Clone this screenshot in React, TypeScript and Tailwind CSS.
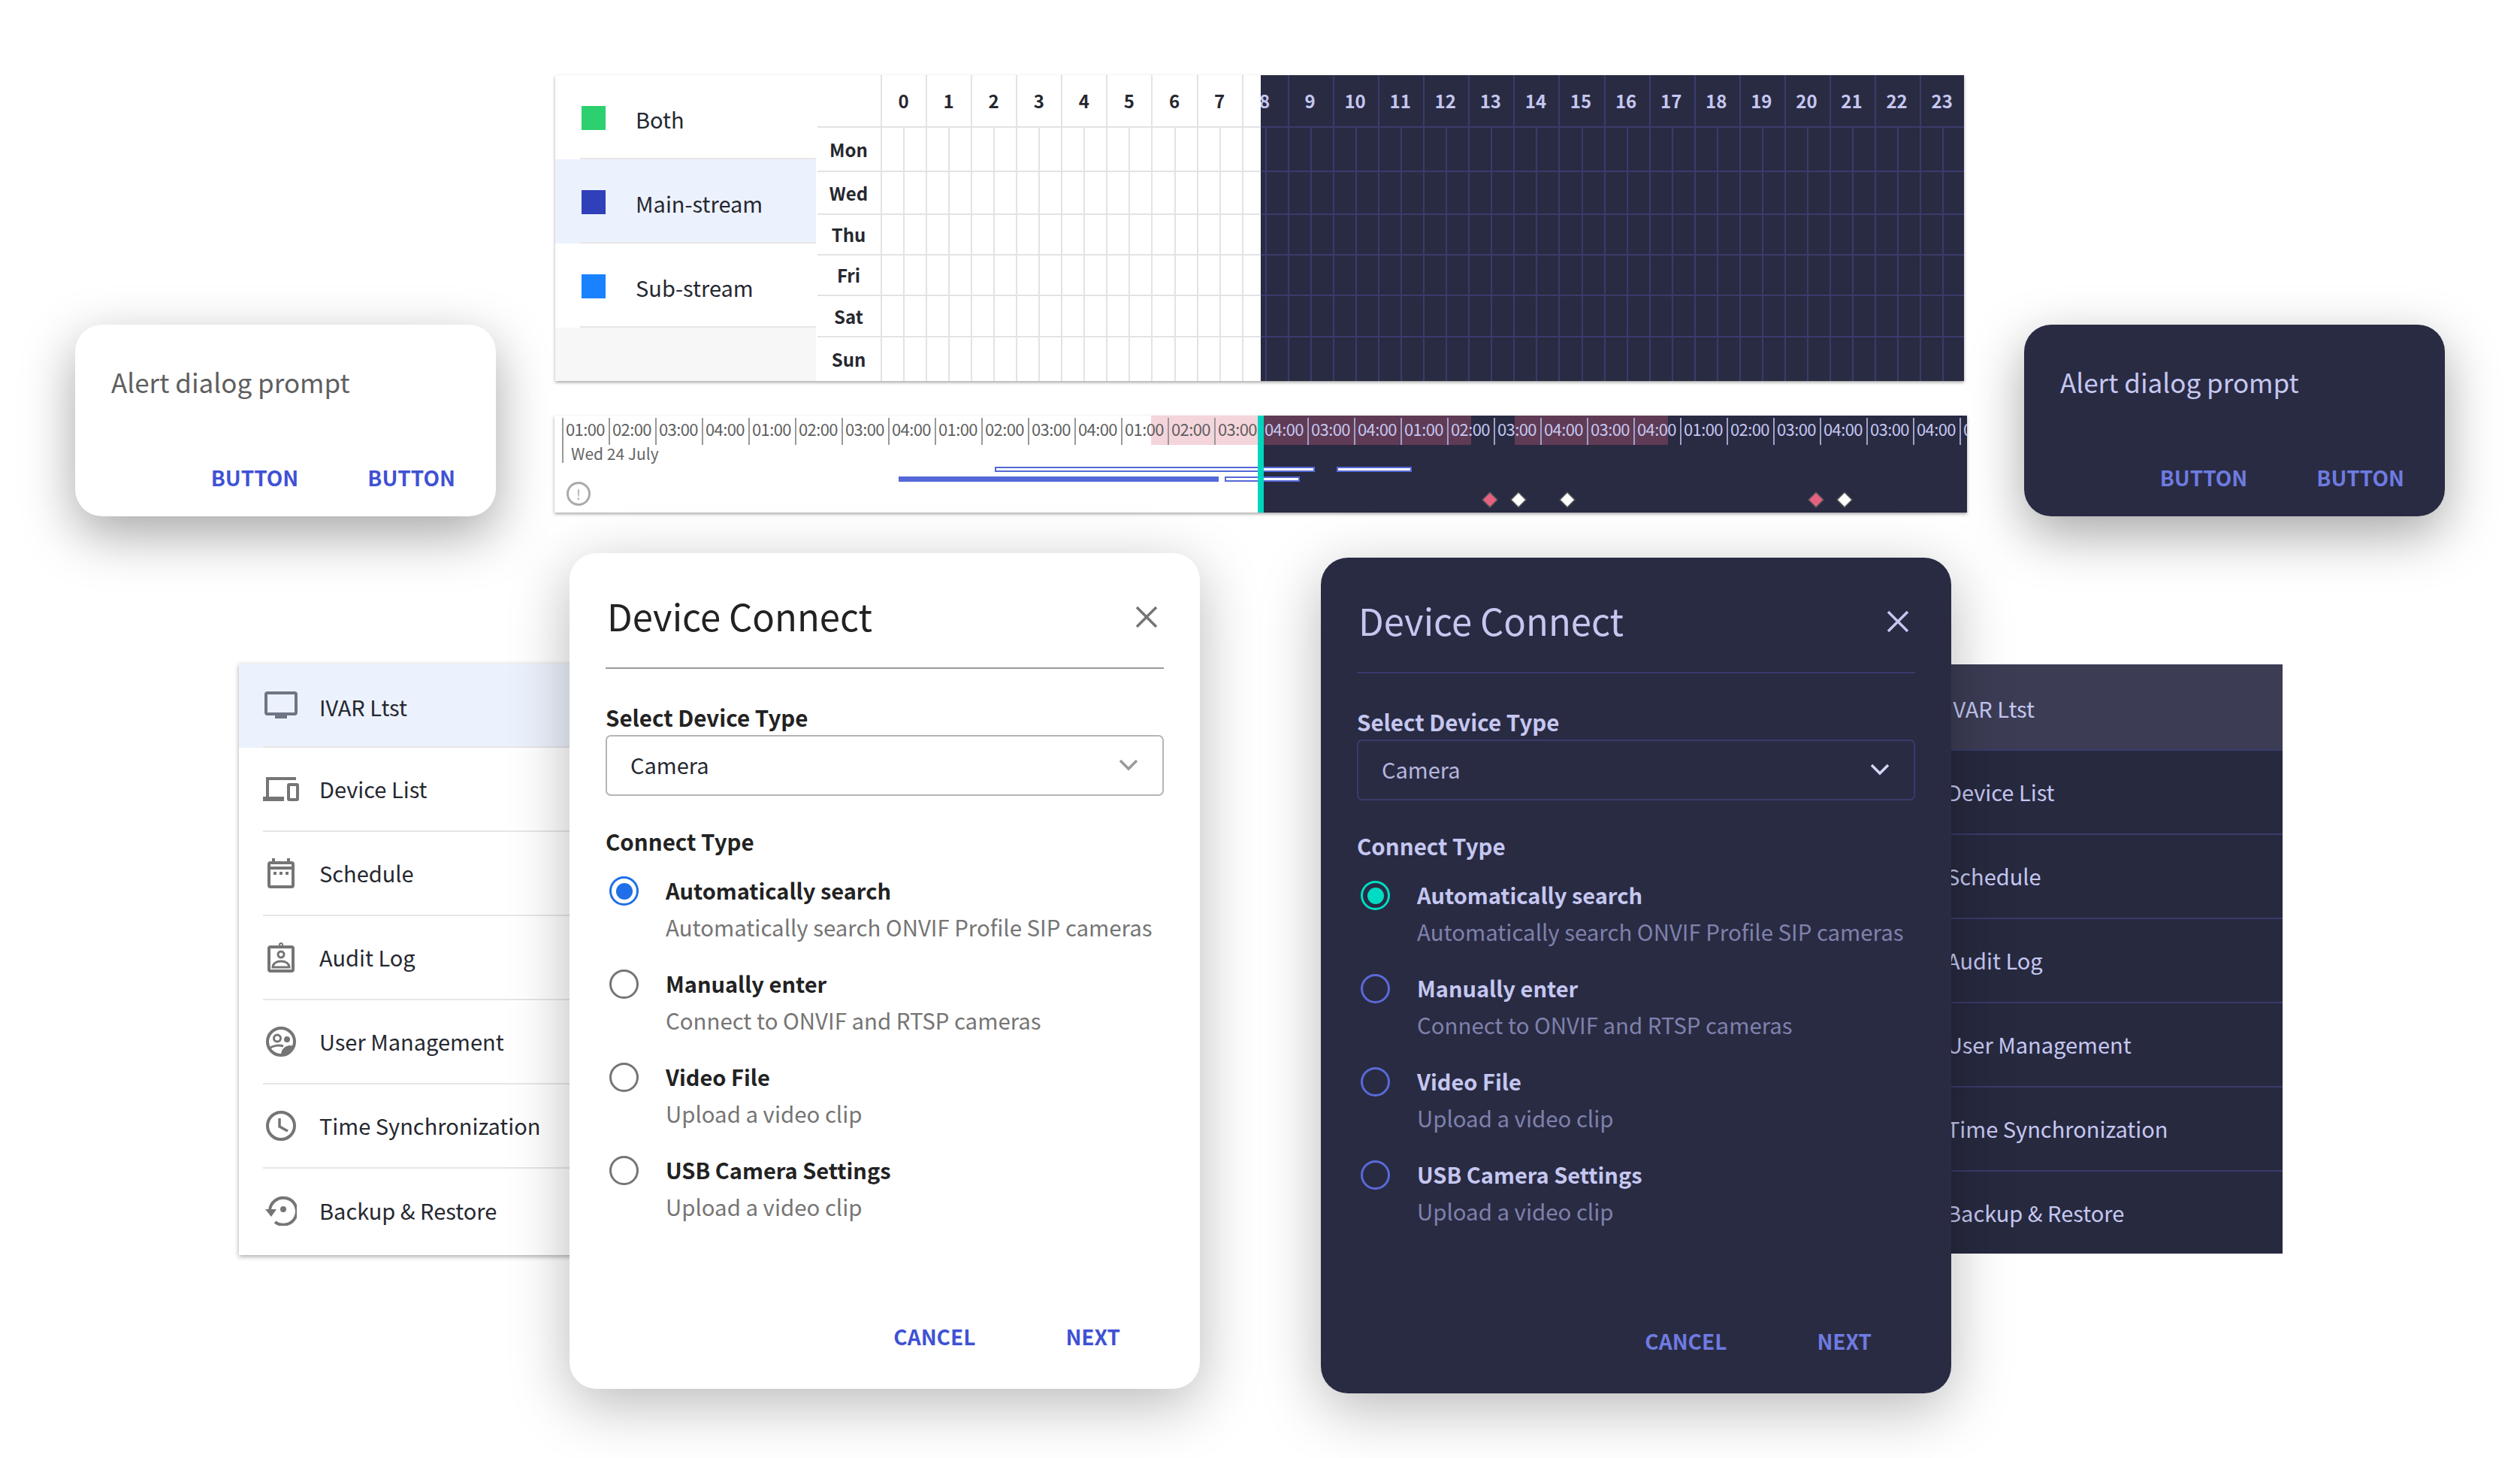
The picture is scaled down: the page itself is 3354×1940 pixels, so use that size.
const FONT = 'font-["Noto_Sans_CJK_SC","Noto_Sans",sans-serif]'

const menu = ['IVAR Ltst', 'Device List', 'Schedule', 'Audit Log', 'User Management', 'Time Synchronization', 'Backup & Restore']
const hours = Array.from({ length: 24 }, (_, i) => i)
const days = [
  { name: 'Mon', h: 'h-[59px]' },
  { name: 'Wed', h: 'h-[57px]' },
  { name: 'Thu', h: 'h-[54px]' },
  { name: 'Fri', h: 'h-[54px]' },
  { name: 'Sat', h: 'h-[55px]' },
  { name: 'Sun', h: 'h-[58px]' },
]
const ticks = ['01:00', '02:00', '03:00', '04:00', '01:00', '02:00', '03:00', '04:00', '01:00', '02:00', '03:00', '04:00', '01:00', '02:00', '03:00', '04:00', '03:00', '04:00', '01:00', '02:00', '03:00', '04:00', '03:00', '04:00', '01:00', '02:00', '03:00', '04:00', '03:00', '04:00', '01:00']

const options = [
  { title: 'Automatically search', desc: 'Automatically search ONVIF Profile SIP cameras' },
  { title: 'Manually enter', desc: 'Connect to ONVIF and RTSP cameras' },
  { title: 'Video File', desc: 'Upload a video clip' },
  { title: 'USB Camera Settings', desc: 'Upload a video clip' },
]

function MenuIcon({ i }: { i: number }) {
  if (i === 0)
    return (
      <svg width="44" height="36" viewBox="0 0 44 36" fill="none">
        <rect x="2" y="2" width="40" height="28" rx="2" stroke="#6e7686" strokeWidth="4" />
        <rect x="14" y="32" width="16" height="4" fill="#6e7686" />
      </svg>
    )
  if (i === 1)
    return (
      <svg width="48" height="32" viewBox="0 0 48 32" fill="none" stroke="#757575" strokeWidth="4">
        <path d="M44 2H6v26" />
        <rect x="0" y="26" width="28" height="6" fill="#757575" stroke="none" />
        <rect x="34" y="10" width="12" height="20" rx="1" />
      </svg>
    )
  if (i === 2)
    return (
      <svg width="36" height="40" viewBox="0 0 36 40" fill="none" stroke="#757575" strokeWidth="4">
        <rect x="2" y="6" width="32" height="32" rx="2" />
        <path d="M2 13h32" />
        <g fill="#757575" stroke="none">
          <rect x="6" y="0" width="4" height="5" />
          <rect x="26" y="0" width="4" height="5" />
          <rect x="8" y="18" width="4" height="4" />
          <rect x="16" y="18" width="4" height="4" />
          <rect x="24" y="18" width="4" height="4" />
        </g>
      </svg>
    )
  if (i === 3)
    return (
      <svg width="36" height="40" viewBox="0 0 36 40" fill="none" stroke="#757575" strokeWidth="4">
        <rect x="2" y="6" width="32" height="32" rx="2" />
        <circle cx="18" cy="3" r="2" strokeWidth="2" />
        <circle cx="18" cy="16" r="4" strokeWidth="3" />
        <path d="M7 33c0-5 5-8 11-8s11 3 11 8z" strokeWidth="3" />
      </svg>
    )
  if (i === 4)
    return (
      <svg width="40" height="40" viewBox="0 0 40 40" fill="none" stroke="#757575" strokeWidth="4">
        <circle cx="20" cy="20" r="18" />
        <circle cx="15" cy="15.5" r="4.5" strokeWidth="3" />
        <circle cx="28" cy="17" r="4" fill="#757575" stroke="none" />
        <path d="M3 30c6-5 14-6 20-4" strokeWidth="3" />
        <path d="M20 38c0-8 6-13 12-13 3 0 4 1 5 1-2 7-9 12-17 12z" fill="#757575" stroke="none" />
      </svg>
    )
  if (i === 5)
    return (
      <svg width="40" height="40" viewBox="0 0 40 40" fill="none" stroke="#757575" strokeWidth="4">
        <circle cx="20" cy="20" r="18" />
        <path d="M18 10v11l11 6" strokeWidth="3.5" />
      </svg>
    )
  return (
    <svg width="42" height="40" viewBox="0 0 42 40" fill="none" stroke="#757575" strokeWidth="4">
      <path d="M6 20a18 18 0 1 1 7 15" />
      <path d="M0 18h15l-7 10z" fill="#757575" stroke="none" />
      <circle cx="24" cy="18" r="4" fill="#757575" stroke="none" />
    </svg>
  )
}

function SideMenu({ dark }: { dark?: boolean }) {
  return (
    <div className={`w-[554px] flex flex-col ${FONT} ${dark ? 'bg-[#27293f] text-[#c5c7f0]' : 'bg-white text-[#262830] shadow-[0_2px_6px_rgba(0,0,0,0.35)]'}`}>
      {menu.map((label, i) => {
        const last = i === menu.length - 1
        let rowClass = 'h-[112px]'
        if (last) rowClass = dark ? 'h-[109px]' : 'h-[115px] pb-[3px]'
        if (i === 0) rowClass = dark ? 'h-[115px] bg-[#3c3d55]' : 'h-[112px] bg-[#ecf2fd]'
        return (
          <div key={label} className={`flex pl-[32px] text-[29px] ${rowClass}`}>
            <div className={`flex-1 h-full flex items-center ${last ? '' : 'border-b-2'} ${dark ? 'border-[#3a3b6b]' : 'border-[#e6e6e6]'}`}>
              <div className="w-[48px] mr-[27px] flex justify-center shrink-0">{!dark && <MenuIcon i={i} />}</div>
              <span className={i === 0 ? 'pt-[5px]' : ''}>{label}</span>
            </div>
          </div>
        )
      })}
    </div>
  )
}

function Alert({ dark }: { dark?: boolean }) {
  return (
    <div className={`w-[560px] h-[255px] rounded-[36px] pl-[48px] pr-[54px] flex flex-col shadow-[0_24px_70px_rgba(0,0,0,0.35)] ${FONT} ${dark ? 'bg-[#292b43]' : 'bg-white'}`}>
      <p className={`text-[35px] leading-none mt-[58px] ${dark ? 'text-[#c5c7f0]' : 'text-[#5f5f5f]'}`}>Alert dialog prompt</p>
      <div className={`mt-auto mb-[38px] flex justify-end gap-[92px] text-[28px] font-bold leading-none ${dark ? 'text-[#6e7be0]' : 'text-[#3f51d4]'}`}>
        <span>BUTTON</span>
        <span>BUTTON</span>
      </div>
    </div>
  )
}

function DeviceDialog({ dark }: { dark?: boolean }) {
  const head = dark ? 'text-[#c5c7f0]' : 'text-[#222]'
  const line = dark ? 'border-[#3a3b6b]' : 'border-[#999]'
  const action = dark ? 'text-[#6e7be0]' : 'text-[#3f51d4]'
  return (
    <div className={`w-[839px] h-[1112px] rounded-[36px] pl-[48px] pr-[48px] flex flex-col shadow-[0_20px_80px_rgba(0,0,0,0.28)] ${FONT} ${dark ? 'bg-[#292b43]' : 'bg-white'}`}>
      <div className={`h-[154px] flex items-start justify-between border-b-2 ${line}`}>
        <h2 className={`text-[49px] font-normal leading-none mt-[58px] ml-[2px] ${head}`}>Device Connect</h2>
        <svg className="mt-[70px] mr-[8px]" width="30" height="30" viewBox="0 0 30 30" stroke={dark ? '#c5c7f0' : '#757575'} strokeWidth="3.5">
          <path d="M2 2l26 26M28 2L2 28" />
        </svg>
      </div>
      <p className={`text-[29.5px] font-bold leading-none mt-[50px] ${head}`}>Select Device Type</p>
      <div className={`mt-[8px] h-[81px] rounded-[7px] border-2 flex items-center justify-between pl-[31px] pr-[32px] ${dark ? 'border-[#3a3b6b]' : 'border-[#b5b5b5]'}`}>
        <span className={`text-[29px] ${dark ? 'text-[#b5b7dd]' : 'text-[#262830]'}`}>Camera</span>
        <svg width="26" height="16" viewBox="0 0 26 16" fill="none" stroke={dark ? '#d5d7f5' : '#999'} strokeWidth="3.5">
          <path d="M2 2l11 11L24 2" />
        </svg>
      </div>
      <p className={`text-[29.5px] font-bold leading-none mt-[46px] ${head}`}>Connect Type</p>
      <div className="mt-[27px] flex flex-col">
        {options.map((o, i) => (
          <div key={o.title} className="h-[124px] flex">
            <div className="w-[80px] shrink-0 pl-[5px]">
              <span
                className={`mt-[5px] w-[39px] h-[39px] rounded-full border-[3.5px] flex items-center justify-center ${
                  i === 0
                    ? dark
                      ? 'border-[#00dcc4]'
                      : 'border-[#1f6fe8]'
                    : dark
                      ? 'border-[#5a6ad8]'
                      : 'border-[#757575]'
                }`}
              >
                {i === 0 && <span className={`w-[22px] h-[22px] rounded-full ${dark ? 'bg-[#00dcc4]' : 'bg-[#1f6fe8]'}`} />}
              </span>
            </div>
            <div className="flex flex-col">
              <span className={`text-[29px] font-bold leading-[46px] ${head}`}>{o.title}</span>
              <span className={`text-[29.4px] leading-[53px] ${dark ? 'text-[#7f81ab]' : 'text-[#757575]'}`}>{o.desc}</span>
            </div>
          </div>
        ))}
      </div>
      <div className={`mt-auto mb-[56px] flex justify-end gap-[120px] pr-[58px] text-[28px] font-bold leading-none ${action}`}>
        <span>CANCEL</span>
        <span>NEXT</span>
      </div>
    </div>
  )
}

function Schedule() {
  const cols = 'grid grid-cols-[84px_repeat(24,minmax(0,1fr))]'
  return (
    <div className={`w-[1875px] h-[407px] flex shadow-[0_2px_4px_rgba(0,0,0,0.35)] ${FONT}`}>
      <div className="w-[347px] mr-[2px] flex flex-col bg-[#f7f7f7] text-[29px] text-[#262830]">
        {[
          { label: 'Both', color: 'bg-[#2dd06e]', bg: 'bg-white' },
          { label: 'Main-stream', color: 'bg-[#303fba]', bg: 'bg-[#ecf2fd]' },
          { label: 'Sub-stream', color: 'bg-[#1a82ff]', bg: 'bg-white' },
        ].map((r) => (
          <div key={r.label} className={`h-[112px] pl-[33px] flex ${r.bg}`}>
            <div className="flex-1 flex items-center border-b-2 border-[#e6e6e6]">
              <span className={`ml-[2px] mt-[4px] mr-[40px] w-[32px] h-[32px] shrink-0 ${r.color}`} />
              <span className="pt-[8px]">{r.label}</span>
            </div>
          </div>
        ))}
      </div>
      <div className="relative flex-1 bg-white overflow-hidden">
        <div className={`${cols} h-[70px] border-b-2 border-[#e3e3e3]`}>
          <div />
          {hours.map((h) => (
            <div key={h} className="flex items-center justify-center pr-[1px] text-[24px] font-bold text-[#262830] border-l-2 border-[#e3e3e3]">
              {h < 8 ? h : ''}
            </div>
          ))}
        </div>
        {days.map((d, i) => (
          <div key={d.name} className={`${cols} ${d.h} ${i < 5 ? 'border-b-2 border-[#e3e3e3]' : ''}`}>
            <div className="flex items-center justify-center pr-[1px] text-[24px] font-bold text-[#262830]">{d.name}</div>
            {hours.map((h) => (
              <div key={h} className="grid grid-cols-2 border-l-2 border-[#e3e3e3]">
                <div className="border-r-2 border-[#e3e3e3] -mr-px" />
                <div />
              </div>
            ))}
          </div>
        ))}
        <div className="absolute left-[590px] right-0 top-0 bottom-0 bg-[#292b43] flex flex-col overflow-hidden">
          <div className="h-[70px] flex border-b-2 border-[#3a3b6b]">
            <div className="w-[36px] shrink-0 text-[24px] font-bold text-[#c5c7f0] flex items-center">
              <span className="-ml-[2px]">8</span>
            </div>
            {hours.slice(9).map((h) => (
              <div key={h} className="w-[60.08px] shrink-0 flex items-center justify-center pr-[3px] text-[24px] font-bold text-[#c5c7f0] border-l-2 border-[#3a3b6b]">
                {h}
              </div>
            ))}
          </div>
          {days.map((d, i) => (
            <div key={d.name} className={`flex ${d.h} ${i < 5 ? 'border-b-2 border-[#3a3b6b]' : ''}`}>
              <div className="w-[6px] shrink-0" />
              <div className="w-[30px] shrink-0 border-l-2 border-[#3a3b6b]" />
              {hours.slice(9).map((h) => (
                <div key={h} className="w-[60.08px] shrink-0 grid grid-cols-2 border-l-2 border-[#3a3b6b]">
                  <div className="border-r-2 border-[#3a3b6b] -mr-px" />
                  <div />
                </div>
              ))}
            </div>
          ))}
        </div>
      </div>
    </div>
  )
}

function Diamond({ pink, className }: { pink?: boolean; className: string }) {
  return (
    <svg className={`absolute ${className}`} width="22" height="22" viewBox="0 0 22 22">
      <path d="M11 1l10 10-10 10L1 11z" fill={pink ? '#e5617f' : '#fff'} stroke="#555" strokeWidth="1.5" />
    </svg>
  )
}

function Timeline() {
  const labelRow = (dark: boolean) =>
    ticks.map((t, i) => (
      <div
        key={i}
        className={`w-[62px] shrink-0 h-[36px] border-l-2 pl-[3px] text-[22px] leading-[28px] tracking-[-0.6px] ${
          dark ? 'border-[#a0a2c8] text-[#c5c7f0]' : 'border-[#999] text-[#5f5f5f]'
        }`}
      >
        {t}
      </div>
    ))
  return (
    <div className={`relative w-[1880px] h-[129px] bg-white overflow-hidden shadow-[0_2px_4px_rgba(0,0,0,0.35)] ${FONT}`}>
      <div className="absolute left-[794px] top-0 h-[39px] w-[142px] bg-[#f5d5dc]" />
      <div className="absolute left-[936px] top-0 bottom-0 right-0 bg-[#292b43]" />
      <div className="absolute left-[944px] top-0 h-[39px] w-[276px] bg-[#5f3b55]" />
      <div className="absolute left-[1278px] top-0 h-[39px] w-[204px] bg-[#5f3b55]" />
      <div className="absolute left-[10px] top-[3px] flex">{labelRow(false).slice(0, 15)}</div>
      <div className="absolute left-[940px] top-[3px] flex">{labelRow(true).slice(15)}</div>
      <div className="absolute left-[10px] top-[39px] h-[24px] w-[2px] bg-[#999]" />
      <div className="absolute left-[22px] top-[37px] text-[21px] leading-[26px] text-[#666]">Wed 24 July</div>
      <div className="absolute left-[586px] top-[68px] w-[426px] h-[7px] border-2 border-[#5468d8] bg-white" />
      <div className="absolute left-[1041px] top-[68px] w-[100px] h-[7px] border-2 border-[#5468d8] bg-white" />
      <div className="absolute left-[458px] top-[81px] w-[426px] h-[7px] bg-[#5468d8]" />
      <div className="absolute left-[892px] top-[81px] w-[100px] h-[7px] border-2 border-[#5468d8] bg-white" />
      <div className="absolute left-[936px] top-0 bottom-0 w-[8px] bg-[#00d6bd]" />
      <div className="absolute left-[16px] top-[88px] w-[32px] h-[32px] rounded-full border-[3px] border-[#aaa] flex items-center justify-center text-[18px] leading-none text-[#aaa]">!</div>
    </div>
  )
}

export default function App() {
  return (
    <div className="relative w-[3354px] h-[1940px] bg-white overflow-hidden">
      <div className="absolute left-[739px] top-[100px]"><Schedule /></div>
      <div className="absolute left-[738px] top-[553px]"><Timeline /></div>
      <Diamond pink className="left-[1972px] top-[654px]" />
      <Diamond className="left-[2010px] top-[654px]" />
      <Diamond className="left-[2075px] top-[654px]" />
      <Diamond pink className="left-[2406px] top-[654px]" />
      <Diamond className="left-[2444px] top-[654px]" />
      <div className="absolute left-[100px] top-[432px]"><Alert /></div>
      <div className="absolute left-[2694px] top-[432px]"><Alert dark /></div>
      <div className="absolute left-[318px] top-[883px]"><SideMenu /></div>
      <div className="absolute left-[2484px] top-[884px]"><SideMenu dark /></div>
      <div className="absolute left-[758px] top-[736px]"><DeviceDialog /></div>
      <div className="absolute left-[1758px] top-[742px]"><DeviceDialog dark /></div>
    </div>
  )
}
